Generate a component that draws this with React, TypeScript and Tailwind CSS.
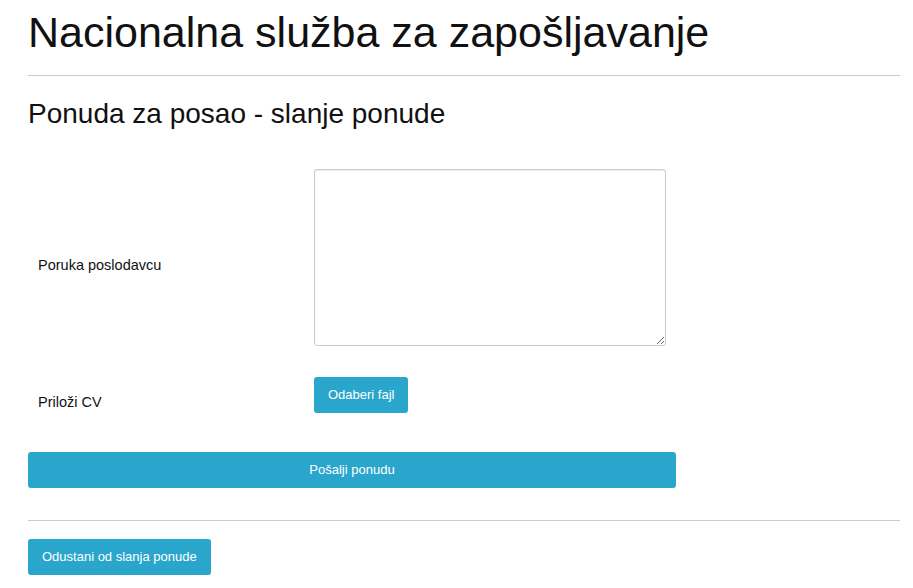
const App = () => {
  return (
    <main className="min-h-screen bg-white px-[28px] pr-[13px] font-['Liberation_Sans',Arial,sans-serif] text-[#111]">
      <h1 className="pt-[6px] text-[43px] leading-[52px]">Nacionalna služba za zapošljavanje</h1>
      <hr className="mt-[17px] border-t border-[#ccc]" />
      <h2 className="mt-[21px] text-[28px] leading-[34px]">Ponuda za posao - slanje ponude</h2>

      <form className="mt-[38px] w-[648px]">
        <div className="flex items-center">
          <label className="w-[286px] pt-[16px] pl-[10px] text-[14.5px]">Poruka poslodavcu</label>
          <textarea className="h-[177px] w-[352px] resize-y rounded-[3px] border border-[#ccc] bg-white p-2 shadow-[inset_0_1px_1px_rgba(0,0,0,0.075)]" />
        </div>

        <div className="mt-[31px] flex items-start">
          <label className="w-[286px] pt-[15px] pl-[10px] text-[14.5px]">Priloži CV</label>
          <button
            type="button"
            className="h-[36px] rounded-[3px] bg-[#2aa6cc] px-[14px] text-[13px] text-white"
          >
            Odaberi fajl
          </button>
        </div>

        <button
          type="button"
          className="mt-[38px] h-[36px] w-full rounded-[3px] bg-[#2aa6cc] text-[13px] text-white"
        >
          Pošalji ponudu
        </button>
      </form>

      <hr className="mt-[32px] border-t border-[#ccc]" />

      <button
        type="button"
        className="mt-[18px] h-[36px] rounded-[3px] bg-[#2aa6cc] px-[14px] text-[13px] text-white"
      >
        Odustani od slanja ponude
      </button>
    </main>
  );
};

export default App;
